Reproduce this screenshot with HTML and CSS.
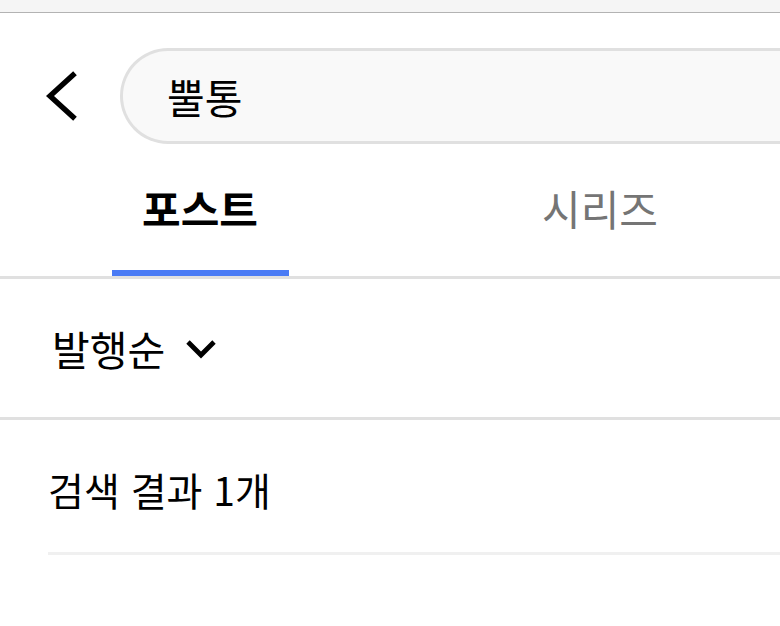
FILE: index.html
```html
<!DOCTYPE html>
<html lang="ko">
<head>
<meta charset="utf-8">
<title>검색</title>
<link rel="stylesheet" href="styles.css">
</head>
<body>
<div class="page">
  <div class="statusbar"></div>
  <header class="search-header">
    <button class="back" aria-label="뒤로">
      <svg width="32" height="50" viewBox="0 0 32 50"><polyline points="27,4 4,25 27,46" fill="none" stroke="#000" stroke-width="5.4" stroke-linecap="square" stroke-linejoin="miter"/></svg>
    </button>
    <div class="search-box"><span class="query">뿔통</span></div>
  </header>
  <nav class="tabs">
    <div class="tab active"><span class="tab-label">포스트</span><span class="indicator"></span></div>
    <div class="tab second"><span class="tab-label">시리즈</span><span class="indicator"></span></div>
  </nav>
  <div class="sort-row">
    <span class="sort-label">발행순</span>
    <svg class="caret" width="32" height="22" viewBox="0 0 32 22"><polyline points="3,4 16,17 29,4" fill="none" stroke="#000" stroke-width="4.8"/></svg>
  </div>
  <section class="results">
    <div class="result-count">검색 결과 1개</div>
  </section>
</div>
</body>
</html>
```

FILE: styles.css
```css
html, body {
  margin: 0;
  padding: 0;
  background: #fff;
}
body {
  font-family: "Noto Sans CJK KR", "Noto Sans", sans-serif;
  font-weight: 400;
  color: #000;
}
.page {
  width: 780px;
  overflow: hidden;
}
.statusbar {
  height: 12px;
  background: #f5f5f5;
  border-bottom: 1px solid #b3b3b3;
}
.search-header {
  display: flex;
  align-items: center;
  padding: 35px 0 0 46px;
  gap: 42px;
}
.back {
  display: flex;
  padding: 0;
  border: 0;
  background: none;
  width: 32px;
  height: 50px;
}
.search-box {
  flex: 1;
  height: 90px;
  border: 3px solid #e0e0e0;
  border-right: 0;
  border-radius: 48px 0 0 48px;
  background: #f9f9f9;
  display: flex;
  align-items: center;
  padding-left: 44px;
}
.query {
  font-size: 41px;
  line-height: 1;
}
.tabs {
  display: grid;
  grid-template-columns: 400px 380px;
  border-bottom: 3px solid #e0e0e0;
}
.tab {
  height: 132px;
  display: flex;
  flex-direction: column;
  align-items: center;
}
.tab.second {
  padding-left: 20px;
}
.tab-label {
  flex: 1;
  display: flex;
  align-items: center;
  font-size: 42px;
  color: #757575;
}
.tab.active .tab-label {
  color: #000;
  font-weight: 700;
}
.indicator {
  width: 177px;
  height: 6px;
}
.tab.active .indicator {
  background: #4a7bf5;
}
.sort-row {
  height: 138px;
  display: flex;
  align-items: center;
  padding-left: 52px;
  gap: 20px;
  border-bottom: 3px solid #e0e0e0;
}
.sort-label {
  font-size: 41px;
}
.caret {
  margin-top: 2px;
}
.results {
  padding-left: 48px;
}
.result-count {
  font-size: 39px;
  line-height: 43px;
  padding: 48px 0 41px;
  border-bottom: 3px solid #f0f0f0;
}
```
